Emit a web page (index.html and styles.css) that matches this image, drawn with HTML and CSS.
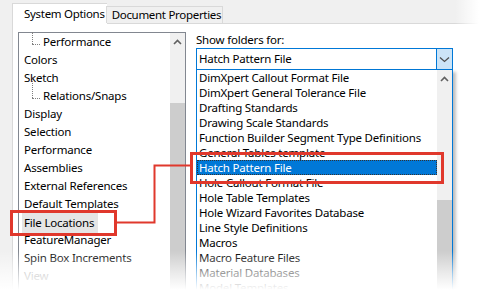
FILE: index.html
```html
<!DOCTYPE html>
<html lang="en">
<head>
<meta charset="UTF-8">
<title>System Options – File Locations</title>
<link rel="stylesheet" href="styles.css">
</head>
<body>
<div id="wrap">

  <!-- Tabs -->
  <div class="tabs">
    <div class="tab active">System Options</div>
    <div class="tab">Document Properties</div>
  </div>

  <!-- Page -->
  <div class="panel">

    <!-- Category tree -->
    <div class="tree">
      <ul class="treeList">
        <li class="child first">Performance</li>
        <li>Colors</li>
        <li>Sketch</li>
        <li class="child">Relations/Snaps</li>
        <li>Display</li>
        <li>Selection</li>
        <li>Performance</li>
        <li>Assemblies</li>
        <li>External References</li>
        <li>Default Templates</li>
        <li><span class="hover">File Locations</span></li>
        <li>FeatureManager</li>
        <li>Spin Box Increments</li>
        <li class="dim">View</li>
      </ul>
      <div class="vscroll tall">
        <div class="arrow"><svg width="9" height="6" viewBox="0 0 9 6"><path d="M1 5 L4.5 1.5 L8 5" fill="none" stroke="#606060" stroke-width="1.6"/></svg></div>
        <div class="thumb"></div>
      </div>
    </div>

    <!-- Folder settings -->
    <div class="folders">
      <div class="label">Show folders for:</div>
      <div class="combo">
        <span class="comboText">Hatch Pattern File</span>
        <span class="dropBtn"><svg width="11" height="7" viewBox="0 0 11 7"><path d="M1 1.5 L5.5 5.5 L10 1.5" fill="none" stroke="#505050" stroke-width="1.3"/></svg></span>
      </div>
      <div class="dropList">
        <ul class="items">
          <li>DimXpert Callout Format File</li>
          <li>DimXpert General Tolerance File</li>
          <li>Drafting Standards</li>
          <li>Drawing Scale Standards</li>
          <li>Function Builder Segment Type Definitions</li>
          <li>General Tables template</li>
          <li class="selected">Hatch Pattern File</li>
          <li>Hole Callout Format File</li>
          <li>Hole Table Templates</li>
          <li>Hole Wizard Favorites Database</li>
          <li>Line Style Definitions</li>
          <li>Macros</li>
          <li>Macro Feature Files</li>
          <li>Material Databases</li>
          <li>Model Templates</li>
        </ul>
        <div class="vscroll list">
          <div class="arrow"><svg width="9" height="6" viewBox="0 0 9 6"><path d="M1 5 L4.5 1.5 L8 5" fill="none" stroke="#606060" stroke-width="1.6"/></svg></div>
          <div class="thumb"></div>
        </div>
      </div>
    </div>
  </div>

  <!-- Callout annotation -->
  <svg class="callout" width="483" height="295" viewBox="0 0 483 295">
    <rect x="11.5" y="211.5" width="104" height="23" fill="none" stroke="#e0382c" stroke-width="3"/>
    <polyline points="117,222.5 154.5,222.5 154.5,165.5 190,165.5" fill="none" stroke="#e0382c" stroke-width="2"/>
    <rect x="191.5" y="153.5" width="251" height="29" fill="none" stroke="#e0382c" stroke-width="3"/>
  </svg>

  <!-- soft torn edges -->
  <div class="fadeRight"></div>
  <div class="fadeBottom"></div>
</div>
</body>
</html>
```

FILE: styles.css
```css
body{margin:0;font-family:"Noto Sans",Arial,sans-serif;font-size:11.5px;letter-spacing:-.2px;color:#000;background:#fff}
#wrap{position:relative;width:483px;height:295px;overflow:hidden;background:#f0f0f0}
ul{list-style:none;margin:0;padding:0}

/* tabs */
.tabs{display:flex;align-items:flex-end;height:23px;padding-left:12px;position:relative;z-index:2}
.tab{height:16px;line-height:16px;padding:0 1px 0 5px;border:1px solid #d9d9d9;border-bottom:none;background:#f0f0f0;margin-left:-1px;white-space:nowrap;letter-spacing:-.3px}
.tab.active{height:20px;line-height:19px;padding:0 2px 0 11px;background:#fff;margin-left:0;margin-bottom:-1px;border-right:none}

/* page */
.panel{display:flex;align-items:flex-start;margin-left:12px;height:272px;background:#fff;border-left:1px solid #d9d9d9;border-top:1px solid #d9d9d9;padding:8px 0 0 5px}

/* tree */
.tree{display:flex;width:166px;height:270px;border:1px solid #828790;background:#fff}
.treeList{flex:1;padding-left:5px}
.treeList li{height:18px;line-height:18px;white-space:nowrap;position:relative}
.treeList li.child{padding-left:19px}
.treeList li.child::before{content:"";position:absolute;left:8px;top:-10px;width:0;height:21px;border-left:1px dotted #808080}
.treeList li.child::after{content:"";position:absolute;left:8px;top:11px;width:8px;border-top:1px dotted #808080}
.treeList li.first::before{top:-1px;height:12px}
.hover{display:inline-block;background:#e5e5e5;padding:0 4px 0 2px;margin-left:-2px;line-height:20px}
.dim{color:#9a9a9a}

/* scrollbars */
.vscroll{width:15px;background:#f0f0f0;display:flex;flex-direction:column}
.vscroll .arrow{height:17px;display:flex;align-items:center;justify-content:center}
.vscroll.tall .arrow{height:18px}
.tall .thumb{margin-top:52px;flex:1;background:#cdcdcd}
.list .arrow{height:18px}
.list .thumb{margin-top:112px;flex:1;background:#cdcdcd}

/* folder list */
.folders{margin-left:10px;width:257px}
.label{height:14px;line-height:14px;margin:1px 0 1px}
.combo{display:flex;height:20px;border:1px solid #0078d7;background:#fff}
.comboText{flex:1;line-height:20px;padding-left:2px}
.dropBtn{width:15px;background:#cce4f7;border-left:1px solid #0078d7;display:flex;align-items:center;justify-content:center}
.dropList{display:flex;height:240px;border-left:1px solid #0078d7;border-right:1px solid #0078d7;background:#fff;box-shadow:3px 2px 3px rgba(0,0,0,.25)}
.items{flex:1}
.items li{height:15px;line-height:15px;padding-left:2px;white-space:nowrap;overflow:hidden}
.items li.selected{background:#0078d7;color:#fff;outline:1px dotted #333;outline-offset:-1px}

/* annotation + fades */
.callout{position:absolute;left:0;top:0;z-index:3}
.fadeRight{position:absolute;right:0;top:0;width:28px;height:295px;background:linear-gradient(to right,rgba(255,255,255,0),#fff 85%);z-index:4}
.fadeBottom{position:absolute;left:0;bottom:0;width:483px;height:44px;background:linear-gradient(to bottom,rgba(255,255,255,0),rgba(255,255,255,.6) 50%,#fff 88%);z-index:4}
```
